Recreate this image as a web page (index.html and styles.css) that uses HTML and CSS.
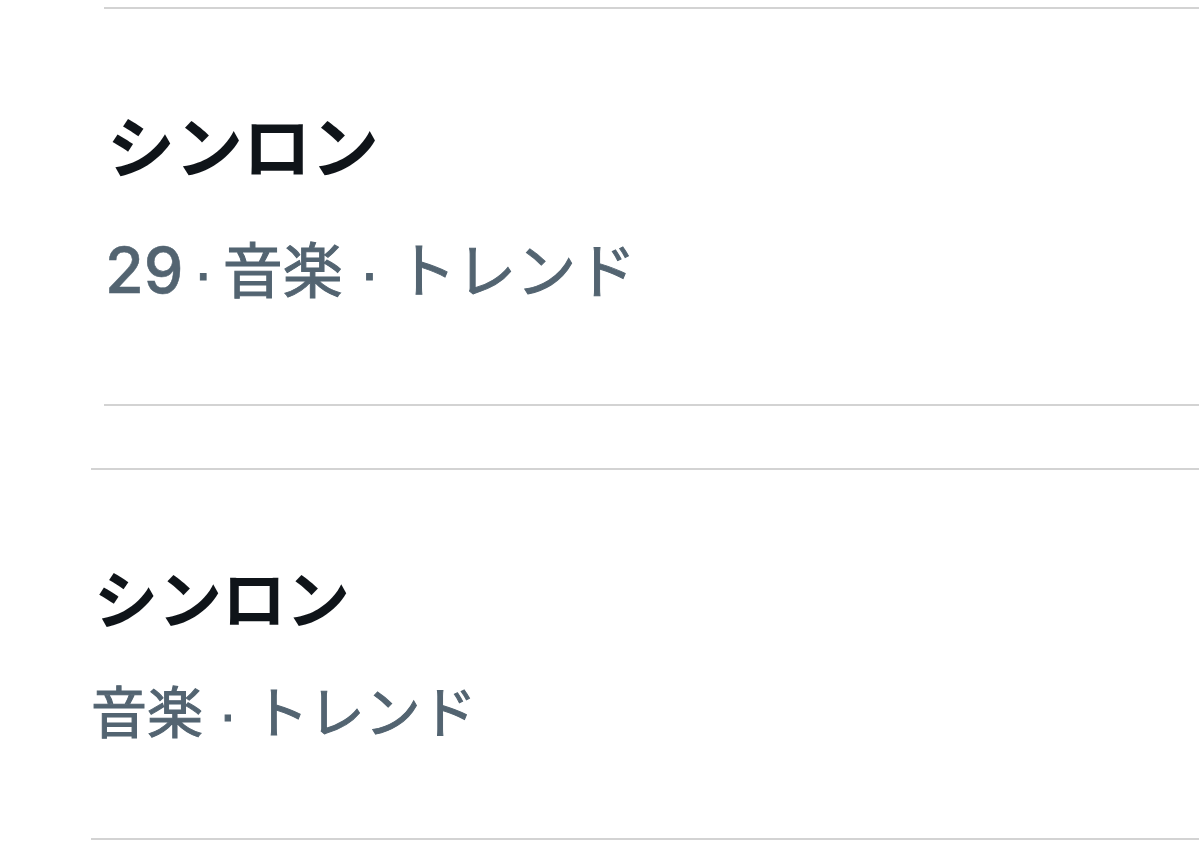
FILE: index.html
```html
<!DOCTYPE html>
<html lang="ja">
<head>
<meta charset="utf-8">
<title>トレンド</title>
<link rel="stylesheet" href="styles.css">
</head>
<body>
  <section class="trend trend-a">
    <div class="trend-title">シンロン</div>
    <div class="trend-meta"><span class="num">29</span><span class="sep"> · </span>音楽 · トレンド</div>
  </section>
  <section class="trend trend-b">
    <div class="trend-title">シンロン</div>
    <div class="trend-meta">音楽 · トレンド</div>
  </section>
</body>
</html>
```

FILE: styles.css
```css
html, body {
  margin: 0;
  padding: 0;
  background: #ffffff;
}

body {
  font-family: "Liberation Sans", "Noto Sans CJK JP", sans-serif;
  width: 1199px;
  height: 846px;
  overflow: hidden;
}

.trend {
  border-top: 2px solid #d3d3d3;
  border-bottom: 2px solid #d3d3d3;
  display: flex;
  flex-direction: column;
}

.trend-title {
  font-family: "Noto Sans CJK JP", sans-serif;
  font-weight: 700;
  color: #0f1419;
}

.trend-meta {
  color: #536471;
  font-family: "Liberation Sans", "Noto Sans CJK JP", sans-serif;
  font-weight: 400;
  -webkit-text-stroke: 1px #536471;
}

.num {
  font-family: "Inter", "Liberation Sans", sans-serif;
  font-weight: 500;
  font-size: 63px;
  -webkit-text-stroke: 0.5px #536471;
}

.sep {
  word-spacing: -7px;
}

.trend-a {
  margin: 7px 0 0 104px;
  padding: 101px 0 0 0;
  height: 294px;
}

.trend-a .trend-title {
  font-size: 68px;
  line-height: 68px;
  padding-left: 3px;
}

.trend-a .trend-meta {
  font-size: 60px;
  line-height: 60px;
  margin-top: 62px;
  padding-left: 1px;
}

.trend-b {
  margin: 62px 0 0 91px;
  padding: 93px 0 0 0;
  height: 275px;
}

.trend-b .trend-title {
  font-size: 64px;
  line-height: 64px;
  padding-left: 3px;
}

.trend-b .trend-meta {
  font-size: 56px;
  line-height: 56px;
  margin-top: 59px;
}
```
